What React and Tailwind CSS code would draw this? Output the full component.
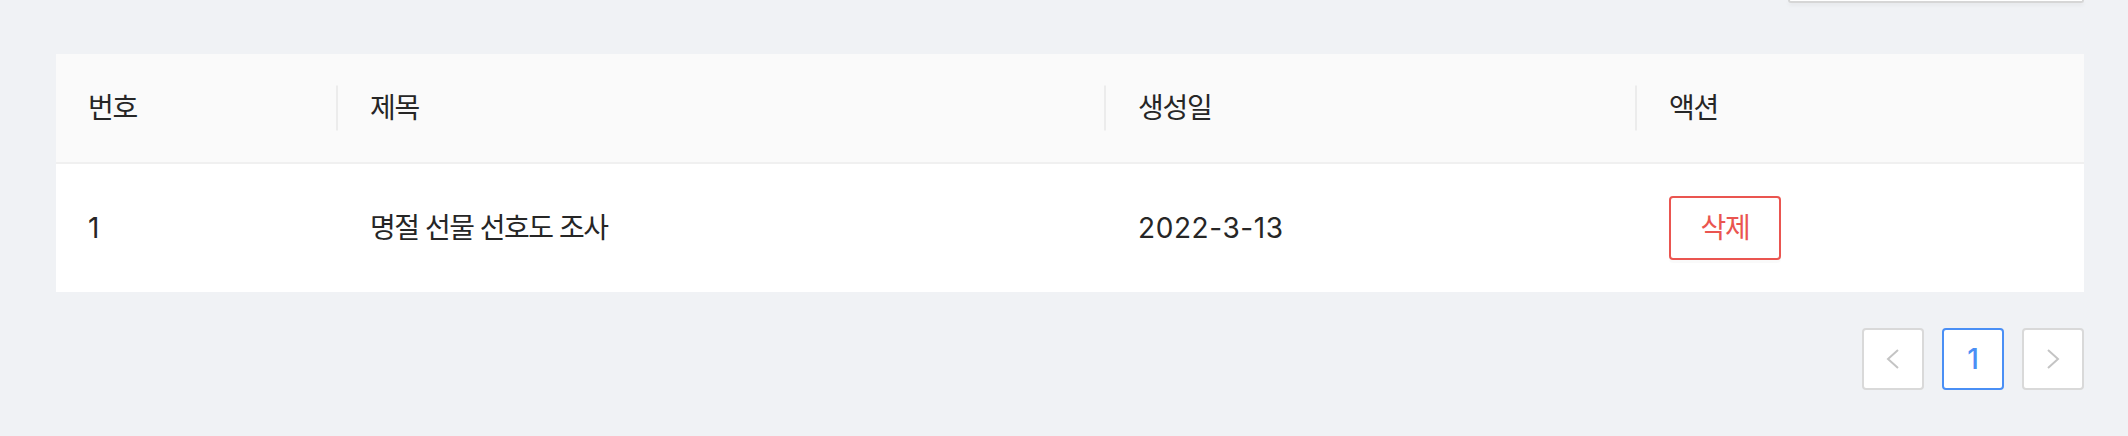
import React from "react";

const font = { fontFamily: '"Inter", "Noto Sans CJK KR", sans-serif' };

function Th({ children, divider, className = "" }) {
  return (
    <th className={`relative text-left font-normal px-[32px] py-[32px] leading-[44px] tracking-[-1.2px] ${className}`}>
      {children}
      {divider && (
        <span className="absolute right-0 top-1/2 -translate-y-1/2 w-[2px] h-[45px] bg-[#ececec]" />
      )}
    </th>
  );
}

export default function App() {
  return (
    <div
      className="w-[2128px] h-[436px] bg-[#f0f2f5] pl-[56px] pr-[44px] text-[28px] text-[#262626] overflow-hidden"
      style={font}
    >
      <div className="flex justify-end">
        <div className="w-[296px] h-[3px] bg-white border-x-2 border-b-2 border-[#d6d6d6] rounded-b-[4px] shadow-[0_2px_4px_rgba(0,0,0,0.06)]" />
      </div>

      <div className="mt-[51px] bg-white">
        <table className="w-full border-collapse table-fixed">
          <colgroup>
            <col className="w-[282px]" />
            <col className="w-[768px]" />
            <col className="w-[531px]" />
            <col />
          </colgroup>
          <thead>
            <tr className="bg-[#fafafa] border-b-2 border-[#f0f0f0]">
              <Th divider>번호</Th>
              <Th divider>제목</Th>
              <Th divider>생성일</Th>
              <Th>액션</Th>
            </tr>
          </thead>
          <tbody>
            <tr>
              <td className="px-[32px] py-[32px] leading-[44px]">1</td>
              <td className="px-[32px] py-[32px] leading-[44px] tracking-[-1.5px]">명절 선물 선호도 조사</td>
              <td className="px-[32px] py-[32px] leading-[44px] tracking-[0.6px]">2022-3-13</td>
              <td className="px-[32px] py-[32px]">
                <button className="w-[112px] h-[64px] border-2 border-[#ea5550] rounded-[4px] text-[#ea5550] bg-white flex items-center justify-center tracking-[-1.2px] shadow-[0_3px_0_rgba(0,0,0,0.02)]">
                  삭제
                </button>
              </td>
            </tr>
          </tbody>
        </table>
      </div>

      <div className="mt-[36px] flex justify-end gap-[18px]">
        <div className="w-[62px] h-[62px] bg-white border-2 border-[#d9d9d9] rounded-[4px] flex items-center justify-center">
          <svg width="16" height="22" viewBox="0 0 16 22" fill="none">
            <polyline points="13,2 3,11 13,20" stroke="#c4c4c4" strokeWidth="2" />
          </svg>
        </div>
        <div className="w-[62px] h-[62px] bg-white border-2 border-[#4a8ff5] rounded-[4px] flex items-center justify-center text-[#4a8ff5] font-medium text-[28px]">
          1
        </div>
        <div className="w-[62px] h-[62px] bg-white border-2 border-[#d9d9d9] rounded-[4px] flex items-center justify-center">
          <svg width="16" height="22" viewBox="0 0 16 22" fill="none">
            <polyline points="3,2 13,11 3,20" stroke="#c4c4c4" strokeWidth="2" />
          </svg>
        </div>
      </div>
    </div>
  );
}
